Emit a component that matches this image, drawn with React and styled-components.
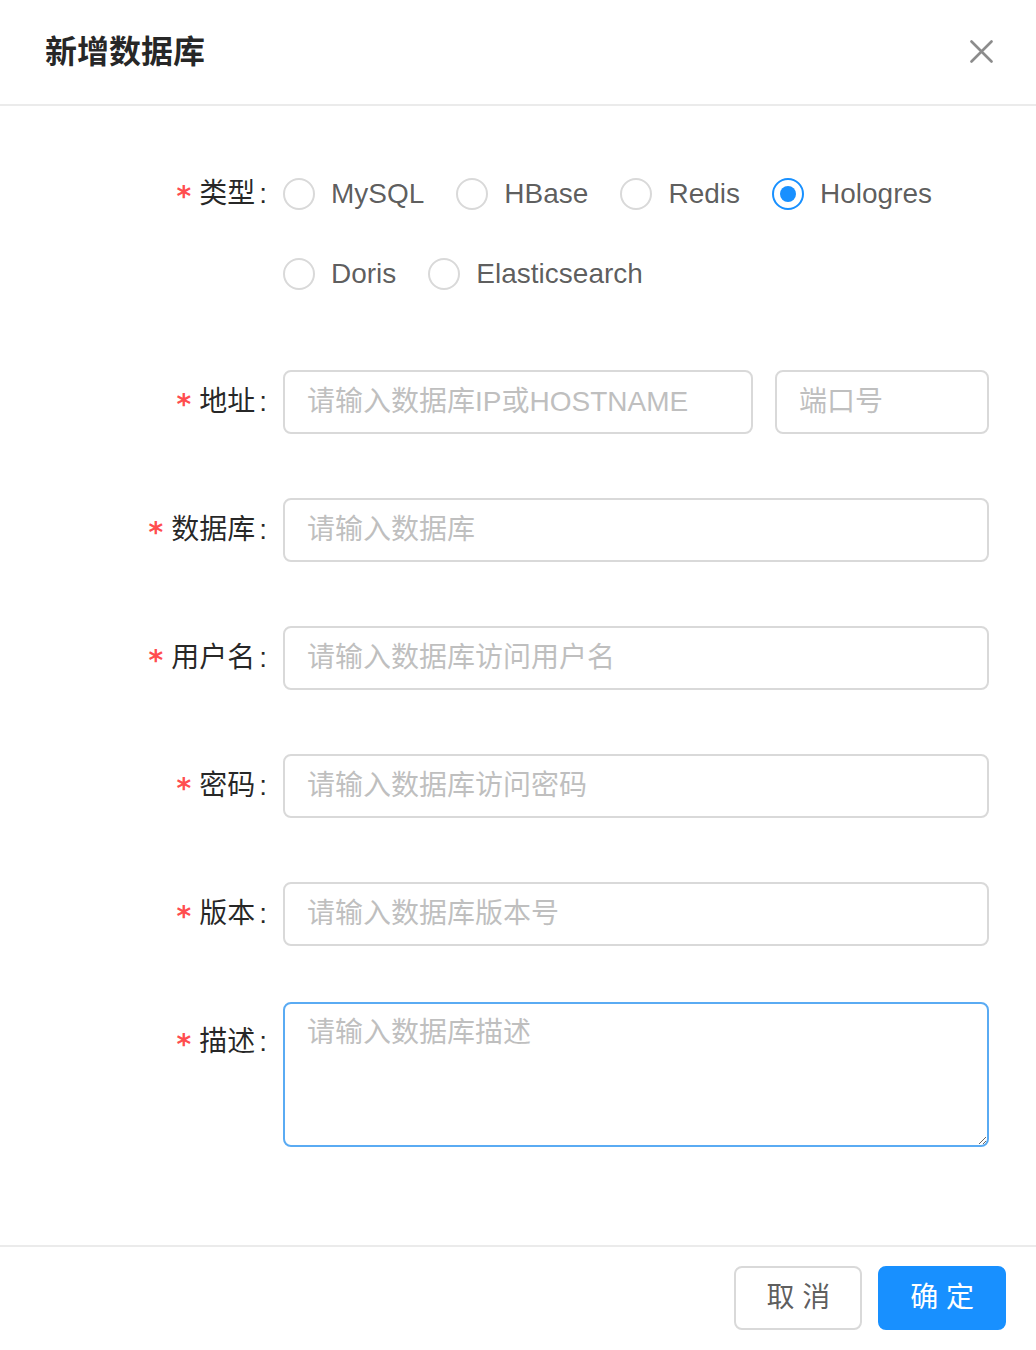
import styled, { createGlobalStyle } from 'styled-components';

const GlobalStyle = createGlobalStyle`
    html, body {
        margin: 0;
        padding: 0;
        background: #fff;
    }
    body {
        font-family: "Liberation Sans", "Noto Sans CJK SC", sans-serif;
        color: rgba(0, 0, 0, 0.85);
    }
    * {
        box-sizing: border-box;
    }
`;

const types = ['MySQL', 'HBase', 'Redis', 'Hologres', 'Doris', 'Elasticsearch'];

const fields = [
    { label: '数据库', placeholder: '请输入数据库' },
    { label: '用户名', placeholder: '请输入数据库访问用户名' },
    { label: '密码', placeholder: '请输入数据库访问密码' },
    { label: '版本', placeholder: '请输入数据库版本号' },
];

export default function App() {
    return (
        <Modal>
            <GlobalStyle />
            <Header>
                <Title>新增数据库</Title>
                <CloseButton aria-label="close">
                    <svg width="23" height="23" viewBox="0 0 23 23">
                        <path d="M1.5 1.5 L21.5 21.5 M21.5 1.5 L1.5 21.5" stroke="#8c8c8c" strokeWidth="2.6" strokeLinecap="round" fill="none" />
                    </svg>
                </CloseButton>
            </Header>

            <Body>
                <Form>
                    <FormItem>
                        <Label><Required>*</Required>类型</Label>
                        <RadioGroup>
                            {types.map((t) => (
                                <RadioItem key={t}>
                                    <Circle $checked={t === 'Hologres'} />
                                    <RadioText>{t}</RadioText>
                                </RadioItem>
                            ))}
                        </RadioGroup>
                    </FormItem>

                    <FormItem>
                        <Label><Required>*</Required>地址</Label>
                        <AddressRow>
                            <Input placeholder="请输入数据库IP或HOSTNAME" />
                            <Input placeholder="端口号" />
                        </AddressRow>
                    </FormItem>

                    {fields.map((f) => (
                        <FormItem key={f.label}>
                            <Label><Required>*</Required>{f.label}</Label>
                            <Input placeholder={f.placeholder} />
                        </FormItem>
                    ))}

                    <FormItem $shift={8}>
                        <Label $offset={8}><Required>*</Required>描述</Label>
                        <TextArea placeholder="请输入数据库描述" />
                    </FormItem>
                </Form>
            </Body>

            <Footer>
                <Button>取 消</Button>
                <Button $primary>确 定</Button>
            </Footer>
        </Modal>
    );
}

const Modal = styled.div`
    width: 100%;
    min-height: 100vh;
    display: flex;
    flex-direction: column;
    background: #fff;
`;

const Header = styled.div`
    display: flex;
    justify-content: space-between;
    align-items: center;
    height: 106px;
    padding: 0 43px 2px 45px;
    border-bottom: 2px solid #ebebeb;
`;

const Title = styled.div`
    font-family: "Noto Sans CJK SC", sans-serif;
    font-size: 32px;
    font-weight: 700;
    line-height: 44px;
    margin-bottom: 4px;
    color: rgba(0, 0, 0, 0.85);
`;

const CloseButton = styled.button`
    display: flex;
    align-items: center;
    justify-content: center;
    padding: 0;
    border: none;
    background: transparent;
    cursor: pointer;
`;

const Body = styled.div`
    padding: 56px 47px 98px 48px;
`;

const Form = styled.div`
    display: flex;
    flex-direction: column;
    gap: 64px;
`;

const FormItem = styled.div`
    display: grid;
    grid-template-columns: 235px 1fr;
    align-items: start;
    margin-top: ${(p) => (p.$shift ? `-${p.$shift}px` : '0')};
`;

const Label = styled.label`
    display: block;
    text-align: right;
    height: 64px;
    line-height: 64px;
    padding-top: ${(p) => p.$offset || 0}px;
    box-sizing: content-box;
    font-size: 28px;
    white-space: nowrap;
    color: rgba(0, 0, 0, 0.85);

    &::after {
        content: ':';
        margin: 0 16px 0 4px;
    }
`;

const Required = styled.span`
    display: inline-block;
    margin-right: 8px;
    color: #ff4d4f;
    font-family: "DejaVu Sans", sans-serif;
    font-weight: 700;
    font-size: 28px;
    line-height: 1;
    vertical-align: -3px;
`;

const RadioGroup = styled.div`
    display: flex;
    flex-wrap: wrap;
    row-gap: 16px;
`;

const RadioItem = styled.label`
    display: inline-flex;
    align-items: center;
    height: 64px;
    margin-right: 16px;
    cursor: pointer;
`;

const Circle = styled.span`
    position: relative;
    width: 32px;
    height: 32px;
    border-radius: 50%;
    border: 2px solid ${(p) => (p.$checked ? '#1890ff' : '#d9d9d9')};
    background: #fff;
    flex-shrink: 0;

    &::after {
        content: '';
        display: ${(p) => (p.$checked ? 'block' : 'none')};
        position: absolute;
        left: 6px;
        top: 6px;
        width: 16px;
        height: 16px;
        border-radius: 50%;
        background: #1890ff;
    }
`;

const RadioText = styled.span`
    padding: 0 16px;
    font-size: 28px;
    line-height: 64px;
    color: rgba(0, 0, 0, 0.65);
`;

const AddressRow = styled.div`
    display: grid;
    grid-template-columns: 1fr 214px;
    gap: 22px;
`;

const Input = styled.input`
    width: 100%;
    height: 64px;
    padding: 0 22px;
    border: 2px solid #d9d9d9;
    border-radius: 8px;
    font-family: inherit;
    font-size: 28px;
    color: rgba(0, 0, 0, 0.85);
    background: #fff;
    outline: none;

    &::placeholder {
        color: #bfbfbf;
    }
`;

const TextArea = styled.textarea`
    display: block;
    width: 100%;
    height: 145px;
    padding: 7px 22px;
    border: 2px solid #5aabf3;
    border-radius: 8px;
    font-family: inherit;
    font-size: 28px;
    line-height: 44px;
    color: rgba(0, 0, 0, 0.85);
    resize: vertical;
    outline: none;

    &::placeholder {
        color: #bfbfbf;
    }
`;

const Footer = styled.div`
    display: flex;
    justify-content: flex-end;
    gap: 16px;
    padding: 19px 30px 20px;
    border-top: 2px solid #ebebeb;
`;

const Button = styled.button`
    height: 64px;
    padding: 0 30px;
    border-radius: 8px;
    border: 2px solid ${(p) => (p.$primary ? '#1890ff' : '#d9d9d9')};
    background: ${(p) => (p.$primary ? '#1890ff' : '#fff')};
    color: ${(p) => (p.$primary ? '#fff' : 'rgba(0, 0, 0, 0.65)')};
    font-family: inherit;
    font-size: 28px;
    line-height: 60px;
    cursor: pointer;
`;
